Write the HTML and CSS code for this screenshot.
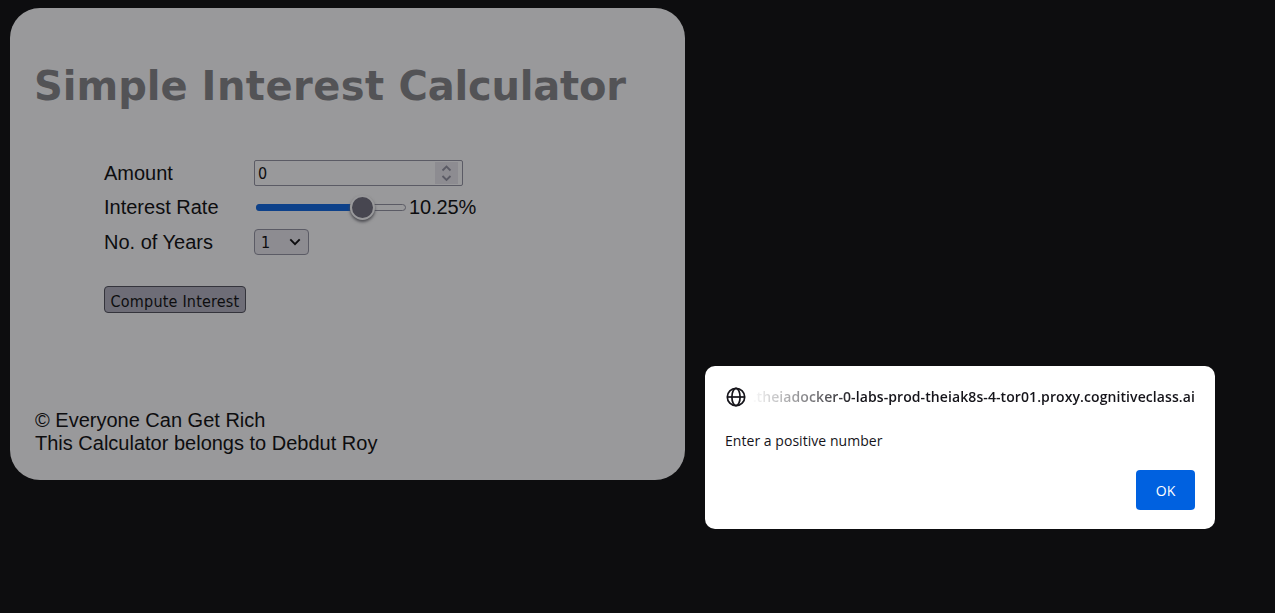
FILE: index.html
```html
<!DOCTYPE html>
<html lang="en">
<head>
<meta charset="utf-8">
<title>Simple Interest Calculator</title>
<link rel="stylesheet" href="styles.css">
</head>
<body>
<main class="card">
  <h1 class="title"><span>Simple <span class="mid">Interest</span> <span class="last">Calculator</span></span></h1>
  <div class="form">
    <div class="row row-amount"><span class="label">Amount</span>
      <div class="number"><span class="num">0</span>
        <svg class="spin" width="23" height="22" viewBox="0 0 23 22"><rect width="23" height="22" fill="#8d8c91"/><path d="M7.500 8.500l4-4 4 4M7.500 14l4 4 4-4" fill="none" stroke="#5b5b65" stroke-width="1.8"/></svg>
      </div>
    </div>
    <div class="row row-rate"><span class="label">Interest Rate</span>
      <div class="range"><div class="fill"></div><div class="thumb"></div></div><span class="rate">10.25%</span>
    </div>
    <div class="row row-years"><span class="label">No. of Years</span>
      <div class="select"><span class="num">1</span>
        <svg width="12" height="8" viewBox="0 0 12 8"><path d="M1.3 1.4L6 6.1l4.700-4.700" fill="none" stroke="#0d0d0f" stroke-width="1.9"/></svg>
      </div>
    </div>
    <div class="compute"><span>Compute Interest</span></div>
  </div>
  <footer class="footer"><div class="copy">© Everyone Can Get Rich</div><div class="owner">This Calculator belongs to Debdut Roy</div></footer>
</main>
<section class="dialog">
  <div class="head">
    <svg class="globe" width="20" height="20" viewBox="0 0 20 20"><g fill="none" stroke="#15141a" stroke-width="1.7"><circle cx="10" cy="10" r="8.7"/><ellipse cx="10" cy="10" rx="4.1" ry="8.7"/><path d="M1.3 10h17.4"/></g></svg>
    <div class="host"><span>.theiadocker-0-labs-prod-theiak8s-4-tor01.proxy.cognitiveclass.ai</span></div>
  </div>
  <div class="message"><span>Enter a positive number</span></div>
  <div class="ok"><span>OK</span></div>
</section>
</body>
</html>
```
FILE: styles.css
```css
* { box-sizing: border-box; }
body {
  margin: 0;
  width: 1275px;
  height: 613px;
  overflow: hidden;
  background: #0d0d0f;
  color: #0d0d0f;
  font: 20px/23px "Liberation Sans", Arial, sans-serif;
  white-space: nowrap;
}
.card {
  display: flex;
  flex-direction: column;
  width: 675px;
  height: 472px;
  margin: 8px 0 0 10px;
  padding: 54px 25px 25px;
  border-radius: 30px;
  background: #99999b;
}
.title {
  margin: 0 0 0 -1px;
  color: #535356;
  font: bold 40px/49px "DejaVu Sans", Verdana, sans-serif;
}
.mid { letter-spacing: 0.45px; }
.last { letter-spacing: -0.2px; }
.form { margin: 49px 0 0 69px; }
.row { display: flex; align-items: center; }
.label { width: 150px; }
.row-amount { height: 26px; }
.row-rate { height: 23px; margin-top: 10px; }
.row-years { height: 26px; margin-top: 10px; }
.num {
  padding-top: 2px;
  font: 16px/20px "DejaVu Sans Condensed", "DejaVu Sans", sans-serif;
}
.number, .select, .compute {
  display: flex;
  align-items: center;
  border: 1px solid #5b5b65;
}
.number {
  justify-content: space-between;
  width: 209px;
  height: 26px;
  padding: 0 4px 0 3px;
  border-radius: 2px;
}
.range {
  display: flex;
  align-items: center;
  width: 150px;
  height: 7px;
  margin-left: 2px;
  border: 1px solid #5b5b65;
  border-radius: 4px;
}
.fill {
  flex: none;
  width: 94px;
  height: 7px;
  margin-left: -1px;
  border-radius: 4px 0 0 4px;
  background: #0d418a;
}
.thumb {
  flex: none;
  width: 25px;
  height: 25px;
  border: 2px solid #99999b;
  border-radius: 50%;
  background: #474650;
  box-shadow: 0 2px 3px #4d4d52;
}
.rate { margin-left: 3px; letter-spacing: -0.1px; }
.select {
  justify-content: space-between;
  width: 55px;
  height: 26px;
  padding: 0 7px 0 6px;
  border-radius: 4px;
  background: #8d8c91;
}
.compute {
  justify-content: center;
  width: 142px;
  height: 27px;
  margin-top: 31px;
  padding-top: 4px;
  border-color: #34343c;
  border-radius: 4px;
  background: #6e6d77;
  font: 16px/20px "DejaVu Sans Condensed", "DejaVu Sans", sans-serif;
  letter-spacing: 0.2px;
}
.footer { margin-top: auto; }
.dialog {
  position: absolute;
  left: 705px;
  top: 366px;
  display: flex;
  flex-direction: column;
  width: 510px;
  height: 163px;
  padding: 20px 20px 19px;
  border-radius: 10px;
  background: #fff;
  color: #15141a;
  font: 14px/20px "Open Sans", "Noto Sans", sans-serif;
}
.head { display: flex; align-items: center; height: 21px; }
.globe { flex: none; margin-left: 1px; }
.host {
  display: flex;
  justify-content: flex-end;
  flex: 1;
  min-width: 0;
  margin-left: 5px;
  padding-top: 1px;
  font-weight: 600;
  letter-spacing: 0.09px;
  -webkit-mask-image: linear-gradient(to right, transparent, #000 106px);
  mask-image: linear-gradient(to right, transparent, #000 106px);
}
.message { height: 20px; margin-top: 24px; letter-spacing: 0.04px; }
.ok {
  display: flex;
  flex: none;
  align-items: center;
  justify-content: center;
  align-self: flex-end;
  width: 59px;
  height: 40px;
  margin-top: 19px;
  padding-top: 1px;
  border-radius: 4px;
  background: #0061e0;
  color: #fff;
}
```
